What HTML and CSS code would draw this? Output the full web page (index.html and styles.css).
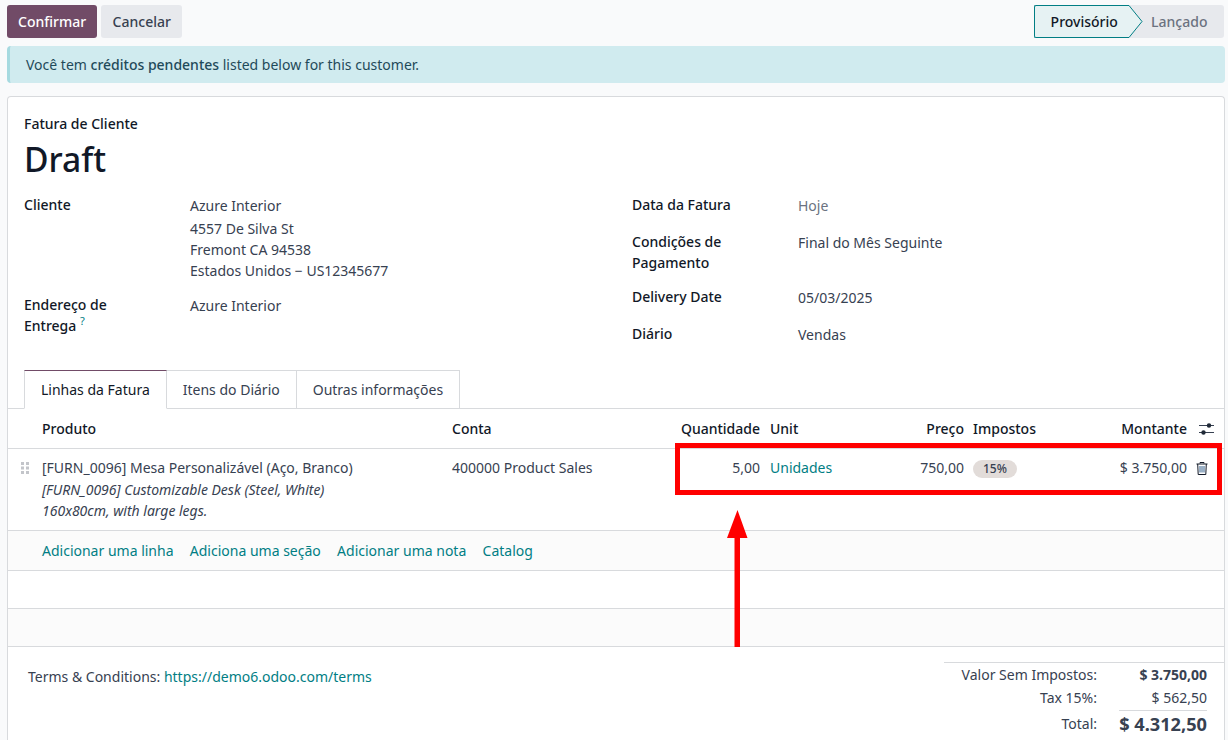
FILE: index.html
```html
<!DOCTYPE html>
<html lang="pt">
<head>
    <meta charset="UTF-8">
    <meta name="viewport" content="width=device-width, initial-scale=1.0">
    <title>Fatura de Cliente</title>
    <link rel="stylesheet" href="styles.css">
</head>
<body>
    <div class="control-bar">
        <div class="actions">
            <button type="button" class="btn btn-primary">Confirmar</button>
            <button type="button" class="btn btn-secondary">Cancelar</button>
        </div>
        <div class="statusbar">
            <div class="status status-current">
                Provisório
                <svg class="chevron" width="15" height="33" viewBox="0 0 15 33"><path d="M0 .5H1L14 16.500 1 32.500H0" fill="#e6f2f3" stroke="#017e84"/></svg>
            </div>
            <div class="status status-next">Lançado</div>
        </div>
    </div>

    <div class="alert">Você tem <strong>créditos pendentes</strong> listed below for this customer.</div>

    <div class="sheet">
        <div class="sheet-head">
            <div class="move-type">Fatura de Cliente</div>
            <h1>Draft</h1>
        </div>

        <div class="groups">
            <div class="group">
                <div class="field field-client">
                    <label>Cliente</label>
                    <div class="value">
                        <div class="address-name">Azure Interior</div>
                        <div>4557 De Silva St</div>
                        <div>Fremont CA 94538</div>
                        <div>Estados Unidos − US12345677</div>
                    </div>
                </div>
                <div class="field">
                    <label>Endereço de Entrega <sup class="help">?</sup></label>
                    <div class="value">Azure Interior</div>
                </div>
            </div>
            <div class="group group-right">
                <div class="field">
                    <label>Data da Fatura</label>
                    <div class="value placeholder">Hoje</div>
                </div>
                <div class="field field-terms">
                    <label>Condições de Pagamento</label>
                    <div class="value">Final do Mês Seguinte</div>
                </div>
                <div class="field">
                    <label>Delivery Date</label>
                    <div class="value">05/03/2025</div>
                </div>
                <div class="field">
                    <label>Diário</label>
                    <div class="value">Vendas</div>
                </div>
            </div>
        </div>

        <div class="tabs">
            <a class="tab active">Linhas da Fatura</a>
            <a class="tab">Itens do Diário</a>
            <a class="tab">Outras informações</a>
        </div>

        <div class="lines">
            <div class="row row-head">
                <div></div>
                <div>Produto</div>
                <div>Conta</div>
                <div class="num">Quantidade</div>
                <div class="pad">Unit</div>
                <div class="num">Preço</div>
                <div class="pad-tax">Impostos</div>
                <div class="num">Montante</div>
                <div class="icon-cell">
                    <svg width="15" height="12" viewBox="0 0 15 12"><path d="M0 2.500h15M0 9.500h15" stroke="#374151"/><circle cx="10" cy="2.500" r="2.200" fill="#1f2937"/><circle cx="4.500" cy="9.500" r="2.200" fill="#1f2937"/></svg>
                </div>
            </div>
            <div class="row row-line">
                <div class="handle">
                    <svg width="10" height="12" viewBox="0 0 10 12"><path d="M0 0h3v3H0zM5 0h3v3H5zM0 4.500h3v3H0zM5 4.500h3v3H5zM0 9h3v3H0zM5 9h3v3H5z" fill="#c3c5ca"/></svg>
                </div>
                <div>
                    <div>[FURN_0096] Mesa Personalizável (Aço, Branco)</div>
                    <div class="desc desc-first">[FURN_0096] Customizable Desk (Steel, White)</div>
                    <div class="desc">160x80cm, with large legs.</div>
                </div>
                <div>400000 Product Sales</div>
                <div class="num">5,00</div>
                <div class="pad link">Unidades</div>
                <div class="num">750,00</div>
                <div class="pad-tax"><span class="badge">15%</span></div>
                <div class="num">$ 3.750,00</div>
                <div class="icon-cell trash">
                    <svg width="12" height="13" viewBox="0 0 12 13"><path d="M4 1.500V.5h4v1M.5 2h11M1.700 2l.5 10.500h7.600l.5-10.500" fill="none" stroke="#111827"/><path d="M4 4v6.500M6 4v6.500M8 4v6.500" stroke="#35608c"/></svg>
                </div>
            </div>
            <div class="add-row">
                <a>Adicionar uma linha</a>
                <a>Adiciona uma seção</a>
                <a>Adicionar uma nota</a>
                <a>Catalog</a>
            </div>
            <div class="empty-row"></div>
            <div class="empty-row shaded"></div>
        </div>

        <div class="sheet-foot">
            <div class="terms">Terms &amp; Conditions: <a>https://demo6.odoo.com/terms</a></div>
            <div class="totals">
                <div class="total-row"><span>Valor Sem Impostos:</span><b>$ 3.750,00</b></div>
                <div class="total-row"><span>Tax 15%:</span><span>$ 562,50</span></div>
                <div class="total-row grand"><span>Total:</span><b>$ 4.312,50</b></div>
            </div>
        </div>
    </div>

    <div class="callout-box"></div>
    <svg class="callout-arrow" width="21" height="137" viewBox="0 0 21 137"><path d="M10.500 0L20.500 28H13V137H7.500V28H0Z" fill="#f00"/></svg>
</body>
</html>
```

FILE: styles.css
```css
html, body {
    height: 740px;
    overflow: hidden;
}

body {
    margin: 0;
    position: relative;
    background-color: #f9fafb;
    font-family: "Noto Sans", sans-serif;
    font-size: 14px;
    line-height: 21px;
    color: #374151;
}

.control-bar {
    display: flex;
    justify-content: space-between;
    padding: 5px 4px 0 7px;
}

.actions {
    display: flex;
    gap: 4px;
}

.btn {
    height: 33px;
    padding: 0 11px;
    border: none;
    border-radius: 3px;
    font-family: inherit;
    font-size: 14px;
    font-weight: 500;
}

.btn-primary {
    background-color: #714b67;
    color: #fff;
}

.btn-secondary {
    padding: 0 11.5px;
    background-color: #e7e9ed;
    color: #374151;
}

.statusbar {
    display: flex;
    height: 33px;
    background-color: #e7e9ed;
    border-radius: 0 3px 3px 0;
}

.status {
    display: flex;
    align-items: center;
    font-weight: 500;
}

.status-current {
    position: relative;
    width: 94px;
    padding-left: 16px;
    box-sizing: border-box;
    background-color: #e6f2f3;
    border: 1px solid #017e84;
    border-right: none;
    border-radius: 2px 0 0 2px;
    color: #111827;
}

.chevron {
    position: absolute;
    top: -1px;
    left: 93px;
}

.status-next {
    padding: 0 16.5px 0 23.5px;
    color: #6b7280;
}

.alert {
    margin: 8px 3px 0 7px;
    height: 37px;
    padding-left: 16px;
    line-height: 37px;
    background-color: #d0ebef;
    border-left: 3px solid #a6dae0;
    border-radius: 4px;
    box-sizing: border-box;
    color: #1f4a5a;
}

.alert strong {
    font-weight: 500;
}

.sheet {
    height: 644px;
    box-sizing: border-box;
    margin: 13px 3px 0 7px;
    background-color: #fff;
    border: 1px solid #d8dadd;
    border-bottom: none;
    border-radius: 4px 4px 0 0;
}

.sheet-head {
    padding: 16px 16px 0;
}

.move-type {
    font-weight: 500;
    color: #111827;
}

h1 {
    margin: 4px 0 0;
    font-size: 33.6px;
    font-weight: 500;
    line-height: 42px;
    color: #111827;
}

.groups {
    display: grid;
    grid-template-columns: 608px 1fr;
    padding: 14px 16px 0;
}

.group {
    display: flex;
    flex-direction: column;
}

.field {
    display: grid;
    grid-template-columns: 166px 1fr;
    margin-bottom: 15px;
}

.field-client {
    margin-bottom: 13px;
}

.field-terms {
    margin-bottom: 13px;
}

.value {
    padding-top: 1px;
}

.address-name {
    margin-bottom: 2px;
}

.group label {
    font-weight: 500;
    color: #111827;
    padding-right: 40px;
}

.help {
    font-size: 11px;
    font-weight: 400;
    line-height: 0;
    color: #017e84;
}

.placeholder {
    color: #6b7280;
}

.tabs {
    display: flex;
    margin-top: 10px;
    padding-left: 16px;
    border-bottom: 1px solid #d8dadd;
    height: 38px;
}

.tab {
    height: 39px;
    box-sizing: border-box;
    padding: 8px 16px;
    border: 1px solid #d8dadd;
    border-left: none;
    color: #374151;
}

.tab:first-child {
    border-left: 1px solid #d8dadd;
}

.tab.active {
    border-top-color: #714b67;
    border-bottom-color: #fff;
    color: #111827;
}

.row {
    display: grid;
    grid-template-columns: 34px 410px 222px 86px 120px 84px 116px 107px 37px;
}

.row-head {
    height: 39px;
    align-items: center;
    border-bottom: 1px solid #d8dadd;
    font-weight: 500;
    color: #111827;
}

.row-line {
    height: 82px;
    padding-top: 8px;
    box-sizing: border-box;
    border-bottom: 1px solid #d8dadd;
}

.num {
    text-align: right;
}

.pad {
    padding-left: 10px;
}

.pad-tax {
    padding-left: 9px;
}

.link, .add-row a, .terms a {
    color: #017e84;
}

.handle {
    padding: 5px 0 0 13px;
    line-height: 0;
}

.desc {
    font-style: italic;
}

.desc-first {
    margin-top: 1px;
}

.badge {
    display: inline-block;
    height: 18px;
    padding: 0 10px;
    border-radius: 9px;
    background-color: #e2dcd9;
    font-size: 12px;
    font-weight: 500;
    line-height: 18px;
}

.icon-cell {
    display: flex;
    align-items: center;
    padding-left: 12px;
}

.trash {
    align-items: flex-start;
    padding: 5px 0 0 9px;
}

.add-row {
    display: flex;
    gap: 16.3px;
    height: 40px;
    padding-left: 34px;
    align-items: center;
    box-sizing: border-box;
    background-color: #fbfbfb;
    border-bottom: 1px solid #d8dadd;
}

.empty-row {
    height: 37px;
    border-bottom: 1px solid #d8dadd;
}

.shaded {
    background-color: #fbfbfb;
}

.sheet-foot {
    display: flex;
    justify-content: space-between;
    padding: 15px 0 0 20px;
}

.terms {
    margin-top: 4px;
}

.totals {
    width: 280px;
    border-top: 1px solid #d8dadd;
}

.total-row {
    display: grid;
    grid-template-columns: 153px 110px;
    text-align: right;
    line-height: 23px;
}

.total-row b {
    font-weight: 700;
    justify-self: end;
}

.grand {
    margin-top: 1px;
    line-height: 27px;
}

.grand b {
    border-top: 1px solid #d8dadd;
    font-size: 18.2px;
}

.callout-box {
    position: absolute;
    left: 675px;
    top: 443px;
    width: 547px;
    height: 52px;
    box-sizing: border-box;
    border: 5px solid #f00;
}

.callout-arrow {
    position: absolute;
    left: 727px;
    top: 510px;
}
```
